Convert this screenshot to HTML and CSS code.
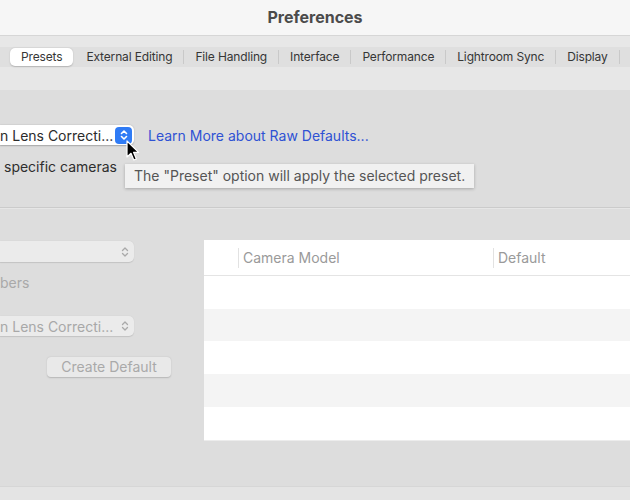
FILE: index.html
```html
<!DOCTYPE html>
<html>
<head>
<meta charset="utf-8">
<link rel="stylesheet" href="styles.css">
</head>
<body>
<div class="window">
  <div class="titlebar">Preferences</div>
  <div class="toolbar">
    <div class="tabs">
      <span class="tab selected">Presets</span>
      <span class="tab">External Editing</span>
      <span class="tab">File Handling</span>
      <span class="tab">Interface</span>
      <span class="tab">Performance</span>
      <span class="tab">Lightroom Sync</span>
      <span class="tab">Display</span>
      <span class="tab last"></span>
    </div>
  </div>
  <div class="main">
    <div class="upper">
      <div class="row">
        <div class="popup">
          <span class="popup-text">n Lens Correcti...</span>
          <span class="stepper">
            <svg width="10" height="12" viewBox="0 0 10 12"><path d="M2.5 4.5 L5 2 L7.5 4.5 M2.5 7.5 L5 10 L7.5 7.5" fill="none" stroke="#fff" stroke-width="1.6" stroke-linecap="round" stroke-linejoin="round"/></svg>
          </span>
          <svg class="cursor" width="14" height="22" viewBox="0 0 14 22"><path d="M1 1 L1 17 L5 13.3 L7.8 20 L10.4 18.9 L7.6 12.4 L12.6 12.4 Z" fill="#000" stroke="#fff" stroke-width="1.2" stroke-linejoin="round"/></svg>
        </div>
        <a class="link">Learn More about Raw Defaults...</a>
      </div>
      <div class="label">specific cameras</div>
      <div class="tooltip">The "Preset" option will apply the selected preset.</div>
    </div>
    <div class="separator"></div>
    <div class="lower">
      <div class="left">
        <div class="popup disabled wide">
          <span class="popup-text"></span>
          <span class="chev">
            <svg width="10" height="12" viewBox="0 0 10 12"><path d="M2.5 4.5 L5 2 L7.5 4.5 M2.5 7.5 L5 10 L7.5 7.5" fill="none" stroke="#a9a9a9" stroke-width="1.3" stroke-linecap="round" stroke-linejoin="round"/></svg>
          </span>
        </div>
        <div class="label disabled-text">bers</div>
        <div class="popup disabled">
          <span class="popup-text">n Lens Correcti...</span>
          <span class="chev">
            <svg width="10" height="12" viewBox="0 0 10 12"><path d="M2.5 4.5 L5 2 L7.5 4.5 M2.5 7.5 L5 10 L7.5 7.5" fill="none" stroke="#a9a9a9" stroke-width="1.3" stroke-linecap="round" stroke-linejoin="round"/></svg>
          </span>
        </div>
        <div class="btn-row"><span class="button">Create Default</span></div>
      </div>
      <div class="table">
        <div class="thead">
          <span class="th blank"></span>
          <span class="th model">Camera Model</span>
          <span class="th def">Default</span>
        </div>
        <div class="tr"></div>
        <div class="tr alt"></div>
        <div class="tr"></div>
        <div class="tr alt"></div>
        <div class="tr"></div>
      </div>
    </div>
    <div class="footer"></div>
  </div>
</div>
</body>
</html>
```

FILE: styles.css
```css
* { box-sizing: border-box; }
html, body {
  margin: 0;
  padding: 0;
  width: 630px;
  height: 500px;
  overflow: hidden;
  font-family: Inter, "Noto Sans", "Liberation Sans", sans-serif;
}
.window {
  width: 630px;
  height: 500px;
  display: flex;
  flex-direction: column;
  background: #dddddd;
}
.titlebar {
  height: 36px;
  background: #f6f6f6;
  border-bottom: 1px solid #d6d6d6;
  display: flex;
  align-items: center;
  justify-content: center;
  font-size: 16px;
  font-weight: 700;
  color: #4b4b4b;
  padding-bottom: 2px;
}
.toolbar {
  background: #e7e7e7;
  padding-top: 11px;
  height: 54px;
}
.tabs {
  height: 20px;
  background: #dfdfdf;
  display: flex;
  align-items: center;
  padding-left: 10px;
  white-space: nowrap;
}
.tab {
  font-size: 12px;
  letter-spacing: -0.15px;
  color: #363636;
  padding: 0 11px;
  line-height: 14px;
  border-left: 1px solid #c9c9c9;
}
.tab.selected {
  background: #ffffff;
  border-radius: 5px;
  border-left: none;
  height: 18px;
  line-height: 18px;
  padding: 0 11px;
  box-shadow: 0 0.5px 1.5px rgba(0,0,0,0.2);
  margin-right: 1px;
}
.tab.selected + .tab { border-left: none; padding-left: 12px; }
.tab.last { padding: 0; height: 14px; }
.main {
  flex: 1;
  display: flex;
  flex-direction: column;
}
.upper {
  position: relative;
  height: 117px;
  padding-top: 35px;
}
.row {
  display: flex;
  align-items: center;
  gap: 14px;
}
.popup {
  position: relative;
  width: 134px;
  height: 20px;
  background: #ffffff;
  border-radius: 0 5px 5px 0;
  box-shadow: 0 0.5px 1.5px rgba(0,0,0,0.25);
  display: flex;
  align-items: center;
  justify-content: space-between;
  padding-right: 2px;
}
.popup-text {
  font-size: 14px;
  color: #2b2b2b;
  white-space: nowrap;
}
.stepper {
  width: 17px;
  height: 17px;
  background: #2f7bf5;
  border-radius: 4px;
  display: flex;
  align-items: center;
  justify-content: center;
}
.cursor {
  position: absolute;
  left: 126px;
  top: 15px;
}
.link {
  font-size: 14px;
  color: #2f52d4;
  cursor: pointer;
}
.label {
  font-size: 14px;
  color: #2e2e2e;
  margin-top: 13px;
  padding-left: 4px;
}
.tooltip {
  position: absolute;
  left: 125px;
  top: 74px;
  width: 349px;
  height: 24px;
  background: #f1f1f1;
  color: #555555;
  font-size: 14px;
  line-height: 24px;
  padding-left: 9px;
  box-shadow: 0 1px 3px rgba(0,0,0,0.25);
  white-space: nowrap;
}
.separator {
  height: 2px;
  border-top: 1px solid #cbcbcb;
  border-bottom: 1px solid #e6e6e6;
}
.lower {
  flex: 1;
  display: flex;
  padding-top: 30px;
  gap: 14px;
}
.left {
  width: 190px;
  display: flex;
  flex-direction: column;
}
.popup.disabled {
  background: #ebebeb;
  box-shadow: 0 0.5px 1px rgba(0,0,0,0.12);
  padding-right: 4px;
}
.popup.disabled .popup-text { color: #a8a8a8; }
.popup.wide { height: 21px; margin-top: 2px; }
.chev { display: flex; align-items: center; }
.disabled-text {
  color: #a9a9a9;
  padding-left: 0;
  margin-top: 12px;
  margin-bottom: 25px;
}
.btn-row {
  padding-left: 47px;
  margin-top: 20px;
}
.button {
  display: inline-block;
  width: 124px;
  height: 20px;
  background: #e9e9e9;
  border-radius: 4px;
  box-shadow: 0 0.5px 1.5px rgba(0,0,0,0.18);
  font-size: 14px;
  color: #a9a9a9;
  line-height: 20px;
  text-align: center;
}
.table {
  flex: 1;
  height: 201px;
  margin-top: 1px;
  background: #ffffff;
  display: flex;
  flex-direction: column;
  border-bottom: 1px solid #ececec;
}
.thead {
  height: 36px;
  padding-top: 2px;
  display: flex;
  align-items: center;
  border-bottom: 1px solid #e4e4e4;
}
.th {
  font-size: 14px;
  color: #9a9a9a;
  height: 20px;
  line-height: 20px;
}
.th.blank { width: 34px; }
.th.model { width: 255px; border-left: 1px solid #e2e2e2; padding-left: 4px; }
.th.def { border-left: 1px solid #e2e2e2; padding-left: 4px; }
.tr { height: 33px; }
.tr.alt { background: #f4f4f4; }
.footer {
  height: 14px;
  background: #e4e4e4;
  border-top: 1px solid #d6d6d6;
}
```
